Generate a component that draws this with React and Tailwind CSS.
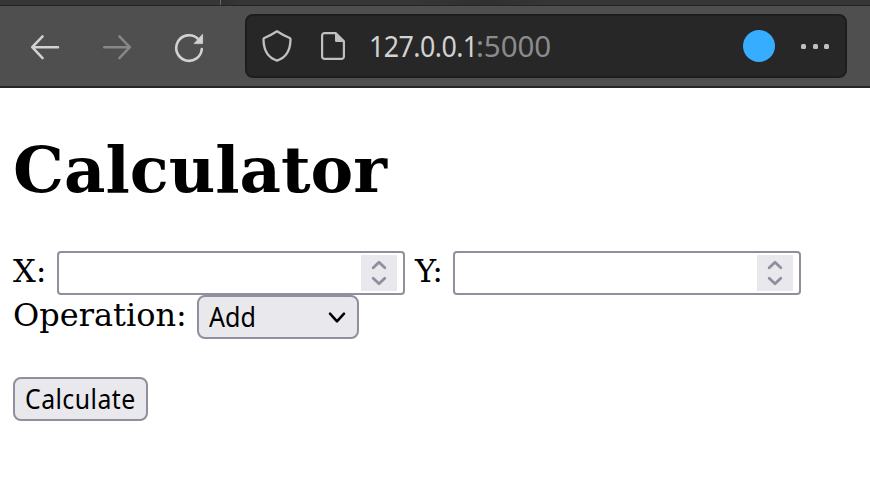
import React from "react";

function TabStrip() {
  return (
    <div className="flex h-[6px] border-b border-[#252525] bg-[#363636]">
      <div className="w-[221px] border-r border-[#666666]" />
      <div className="w-[194px] bg-linear-to-r from-[#303030] to-[#363636] to-10%" />
      <div className="w-[140px] bg-linear-to-r from-[#363636] via-[#303030] to-[#363636]" />
    </div>
  );
}

function Toolbar() {
  return (
    <div className="flex h-[82px] items-start border-b-2 border-[#262626] bg-[#4f4f4f] pt-2 pl-[29px]">
      <svg className="mt-[17px] h-8 w-8 shrink-0" viewBox="0 0 32 32" fill="none" stroke="#d2d2d2" strokeWidth="2.5" strokeLinecap="round" strokeLinejoin="round">
        <path d="M29 16.2H3.2M13.6 5.3L3.2 16.2l10.4 10.9" />
      </svg>
      <svg className="mt-[17px] ml-10 h-8 w-8 shrink-0" viewBox="0 0 32 32" fill="none" stroke="#878787" strokeWidth="2.5" strokeLinecap="round" strokeLinejoin="round">
        <path d="M3.2 16.2H29M18.4 5.3l10.4 10.9-10.4 10.9" />
      </svg>
      <svg className="mt-[17px] ml-10 h-8 w-8 shrink-0" viewBox="0 0 32 32" fill="none" stroke="#d2d2d2" strokeWidth="2.6" strokeLinecap="round">
        <path d="M28.8 18A12.8 12.8 0 1 1 25 7.9" />
        <path d="M29.6 3.6V12.6h-8.2z" fill="#d2d2d2" stroke="#d2d2d2" strokeWidth="0.8" strokeLinejoin="round" />
      </svg>
      <div className="ml-10 flex h-16 w-[602px] items-center rounded-[8px] border-2 border-[#1d1d1d] bg-[#272727] pl-[14px]">
        <svg className="h-8 w-8 shrink-0" viewBox="0 0 32 32" fill="none" stroke="#c0c0c0" strokeWidth="2.3" strokeLinejoin="round">
          <path d="M16 1.3Q22.5 5.6 28.7 8Q29.6 8.5 29.5 9.6C29.3 20.5 24.5 28 16 30.7C7.5 28 2.7 20.5 2.5 9.6Q2.4 8.5 3.3 8Q9.5 5.6 16 1.3Z" />
        </svg>
        <svg className="ml-6 h-8 w-8 shrink-0" viewBox="0 0 32 32" fill="none" stroke="#c0c0c0" strokeWidth="2.2" strokeLinejoin="round">
          <path d="M7.6 3.1H18.6L26.9 11.4V26.4a2.5 2.5 0 0 1-2.5 2.5H7.6a2.5 2.5 0 0 1-2.5-2.5V5.6a2.5 2.5 0 0 1 2.5-2.5z" />
          <path d="M18 2v8.7a1.3 1.3 0 0 0 1.3 1.3H28z" fill="#c0c0c0" stroke="none" />
        </svg>
        <div className="ml-5 w-[374px] shrink-0 font-['Noto_Sans',sans-serif] text-[29px] leading-10 text-[#d2d2d2]">
          <span className="flex whitespace-nowrap">
            <span className="inline-block w-[107px] origin-left scale-x-[0.925] tracking-[-0.6px]">127.0.0.1</span>
            <span className="inline-block origin-left scale-x-[1.02] tracking-[-0.1px] text-[#8b8b8b]">:5000</span>
          </span>
        </div>
        <div className="h-8 w-8 shrink-0 rounded-full bg-[#37adff]" />
        <div className="ml-[26px] flex gap-[6.5px]">
          <span className="size-[5px] rounded-[1.5px] bg-[#c0c0c0]" />
          <span className="size-[5px] rounded-[1.5px] bg-[#c0c0c0]" />
          <span className="size-[5px] rounded-[1.5px] bg-[#c0c0c0]" />
        </div>
      </div>
    </div>
  );
}

function NumberField() {
  return (
    <div className="flex h-11 w-[348px] shrink-0 rounded-[4px] border-2 border-[#8f8f9d] bg-white py-[2px] pr-[6px]">
      <input className="min-w-0 flex-1 bg-transparent outline-none" />
      <svg className="h-9 w-9 bg-[#e9e8ed]" viewBox="0 0 36 36" fill="none" stroke="#8f8f9d" strokeWidth="2.8" strokeLinecap="round" strokeLinejoin="round">
        <path d="M12.2 12.8L18 7.2l5.8 5.6M12.2 23.2L18 28.8l5.8-5.6" />
      </svg>
    </div>
  );
}

export default function App() {
  return (
    <div className="h-[503px] w-[870px] overflow-hidden bg-white text-black">
      <TabStrip />
      <Toolbar />
      <main className="pl-[13px] font-['DejaVu_Serif',serif] text-[32px] leading-[38px]">
        <h1 className="mt-[44px] text-[64px] leading-[75px] font-bold">Calculator</h1>
        <div className="mt-[44px] flex h-11">
          <span className="w-11 shrink-0 pt-px">X:</span>
          <NumberField />
          <span className="ml-[10px] w-[38px] shrink-0 pt-px">Y:</span>
          <NumberField />
        </div>
        <div className="flex h-11">
          <span className="w-[184px] shrink-0 pt-px">Operation:</span>
          <div className="flex h-11 w-[162px] items-center justify-between rounded-[8px] border-2 border-[#8f8f9d] bg-[#e9e8ed] pr-[10px] pl-[10px]">
            <span className="inline-block origin-left scale-x-[0.94] font-['Noto_Sans',sans-serif] text-[26.67px]">Add</span>
            <svg className="h-5 w-5" viewBox="0 0 20 20" fill="none" stroke="#000000" strokeWidth="2.6" strokeLinecap="round" strokeLinejoin="round">
              <path d="M3 6.7l7 7.6 7-7.6" />
            </svg>
          </div>
        </div>
        <button className="mt-[38px] flex h-11 w-[135px] items-center rounded-[8px] border-2 border-[#8f8f9d] bg-[#e9e8ed] pl-[10px] font-['Noto_Sans',sans-serif] text-[26.67px]">
          <span className="inline-block origin-left scale-x-[0.93] tracking-[0.5px]">Calculate</span>
        </button>
      </main>
    </div>
  );
}
